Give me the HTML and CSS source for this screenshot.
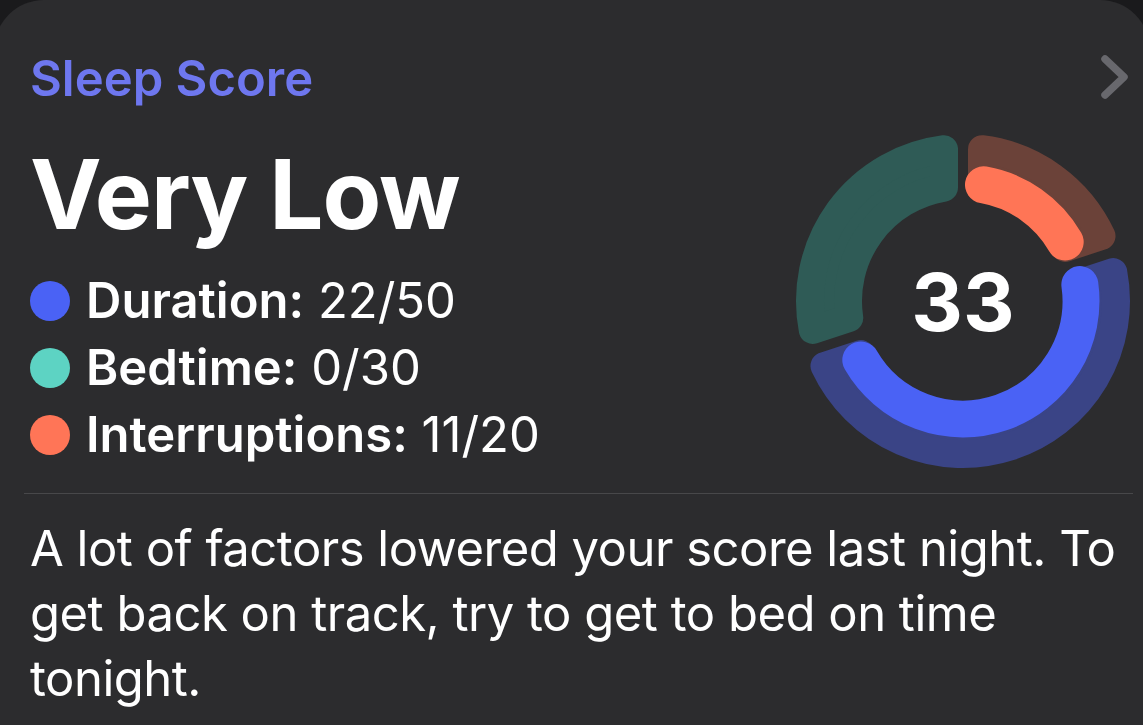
FILE: index.html
```html
<!DOCTYPE html>
<html lang="en">
<head>
<meta charset="utf-8">
<title>Sleep Score</title>
<link rel="stylesheet" href="styles.css">
</head>
<body>
<div class="card">
  <div class="header">
    <div class="label">Sleep Score</div>
    <svg class="chevron" viewBox="0 0 30 46" width="30" height="46" aria-hidden="true">
      <path d="M5 5 L24 23 L5 41" fill="none" stroke="#68686d" stroke-width="7.5" stroke-linecap="round" stroke-linejoin="round"/>
    </svg>
  </div>
  <div class="main">
    <div class="summary">
      <div class="rating">Very Low</div>
      <ul class="legend">
        <li class="item"><span class="dot dot-duration"></span><b>Duration:</b>&nbsp;22/50</li>
        <li class="item"><span class="dot dot-bedtime"></span><b>Bedtime:</b>&nbsp;0/30</li>
        <li class="item"><span class="dot dot-interrupt"></span><b>Interruptions:</b>&nbsp;11/20</li>
      </ul>
    </div>
    <div class="ring">
      <svg viewBox="-170 -170 340 340" width="340" height="340" aria-hidden="true">
        <g class="tracks">
          <path class="trk-orange" d="M19,-151.82 A153,153 0 0 1 138.51,-64.99 L102.01,-53.10 A115,115 0 0 0 19,-113.42 Z"/>
          <path class="trk-blue" d="M150.26,-28.84 A153,153 0 0 1 -138.51,64.99 L-102.01,53.10 A115,115 0 0 0 113.74,-16.98 Z"/>
          <path class="trk-teal" d="M-150.26,28.84 A153,153 0 0 1 -19,-151.82 L-19,-113.42 A115,115 0 0 0 -113.74,16.98 Z"/>
        </g>
        <g class="progress">
          <path class="prg-blue" d="M116.85,-16.42 A118,118 0 0 1 -102.19,59"/>
          <path class="prg-orange" d="M20.49,-116.21 A118,118 0 0 1 102.19,-59"/>
        </g>
      </svg>
      <div class="score">33</div>
    </div>
  </div>
  <div class="divider"></div>
  <p class="desc">A lot of factors lowered your score last night. To get back on track, try to get to bed on time tonight.</p>
</div>
</body>
</html>
```

FILE: styles.css
```css
html, body { margin: 0; padding: 0; }
body { background: #1a1a1c; width: 1143px; height: 725px; overflow: hidden; font-family: "Inter", "Liberation Sans", sans-serif; color: #fff; }
.card { background: #2c2c2e; margin: 0 -7px 0 -6px; border-radius: 50px 50px 0 0; padding: 48px 17px 0 36px; height: 725px; box-sizing: border-box; overflow: hidden; }
.header { display: flex; justify-content: space-between; align-items: center; height: 61px; margin-bottom: 22px; }
.label { font-size: 49px; line-height: 61px; font-weight: 600; color: #6e77ef; }
.chevron { margin-right: 3px; margin-top: -4px; }
.main { display: flex; justify-content: space-between; align-items: flex-start; }
.summary { padding-top: 8px; }
.rating { font-size: 96px; line-height: 110px; font-weight: 700; letter-spacing: -1px; }
.legend { list-style: none; margin: 18px 0 0; padding: 0; }
.item { display: flex; align-items: center; font-size: 49px; line-height: 67px; }
.item b { font-weight: 600; }
.dot { width: 40px; height: 40px; border-radius: 50%; margin-right: 16px; flex: none; }
.dot-duration { background: #4a62f5; }
.dot-bedtime { background: #5dd3c3; }
.dot-interrupt { background: #ff7557; }
.ring { position: relative; width: 340px; height: 340px; }
.ring svg { display: block; }
.tracks path { stroke-width: 28; stroke-linejoin: round; }
.trk-orange { fill: #6b4239; stroke: #6b4239; }
.trk-blue { fill: #3a4486; stroke: #3a4486; }
.trk-teal { fill: #2f5b56; stroke: #2f5b56; }
.progress path { fill: none; stroke-width: 37; stroke-linecap: round; }
.prg-blue { stroke: #4a62f5; }
.prg-orange { stroke: #ff7556; }
.score { position: absolute; inset: 0; display: flex; align-items: center; justify-content: center; font-size: 80px; font-weight: 700; }
.divider { height: 1px; background: #48484a; margin: 22px 0 22px -6px; }
.desc { margin: 0; font-size: 49px; line-height: 65px; font-weight: 400; letter-spacing: -0.5px; }
```
